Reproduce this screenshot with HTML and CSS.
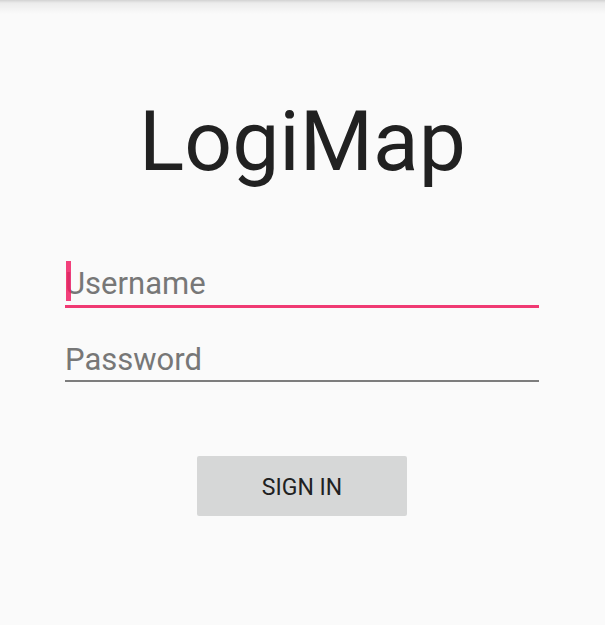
FILE: index.html
```html
<!DOCTYPE html>
<html lang="en">
<head>
<meta charset="utf-8">
<title>LogiMap</title>
<link rel="stylesheet" href="styles.css">
</head>
<body>
<div class="shadow"></div>
<main class="screen">
  <h1 class="title">LogiMap</h1>
  <form class="form">
    <label class="field field-focused">
      <span class="caret"></span>
      <span class="hint">Username</span>
    </label>
    <label class="field">
      <span class="hint">Password</span>
    </label>
    <button type="button" class="btn">SIGN IN</button>
  </form>
</main>
</body>
</html>
```
FILE: styles.css
```css
html, body {
  margin: 0;
  padding: 0;
  height: 100%;
}
body {
  background: #fafafa;
  font-family: Roboto, "Noto Sans", sans-serif;
  position: relative;
  overflow: hidden;
}
.shadow {
  position: absolute;
  left: 0;
  top: 0;
  right: 0;
  height: 14px;
  background: linear-gradient(rgba(0,0,0,0.16), rgba(0,0,0,0.06) 3px, rgba(0,0,0,0) 14px);
  pointer-events: none;
}
.screen {
  padding-top: 100px;
  display: flex;
  flex-direction: column;
}
.title {
  margin: 0;
  font-size: 84px;
  line-height: 84px;
  font-weight: 400;
  color: #212121;
  text-align: center;
}
.form {
  margin: 78px 66px 0 65px;
  display: flex;
  flex-direction: column;
}
.field {
  position: relative;
  display: block;
  height: 40px;
  padding-bottom: 2px;
  border-bottom: 2px solid #7d7d7d;
}
.field + .field {
  margin-top: 30px;
}
.field-focused {
  padding-bottom: 3px;
  border-bottom: 3px solid #f03a73;
}
.hint {
  display: block;
  padding-top: 3px;
  font-size: 31px;
  line-height: 37px;
  color: #777777;
}
.caret {
  position: absolute;
  left: 1px;
  top: -1px;
  width: 5px;
  height: 40px;
  background: rgba(240, 30, 100, 0.85);
}
.btn {
  align-self: center;
  margin-top: 74px;
  width: 210px;
  height: 60px;
  border: none;
  border-radius: 2px;
  background: #d6d7d7;
  color: #212121;
  font-family: Roboto, "Noto Sans", sans-serif;
  font-size: 23px;
  padding: 3px 0 0;
  display: flex;
  align-items: center;
  justify-content: center;
}
```
